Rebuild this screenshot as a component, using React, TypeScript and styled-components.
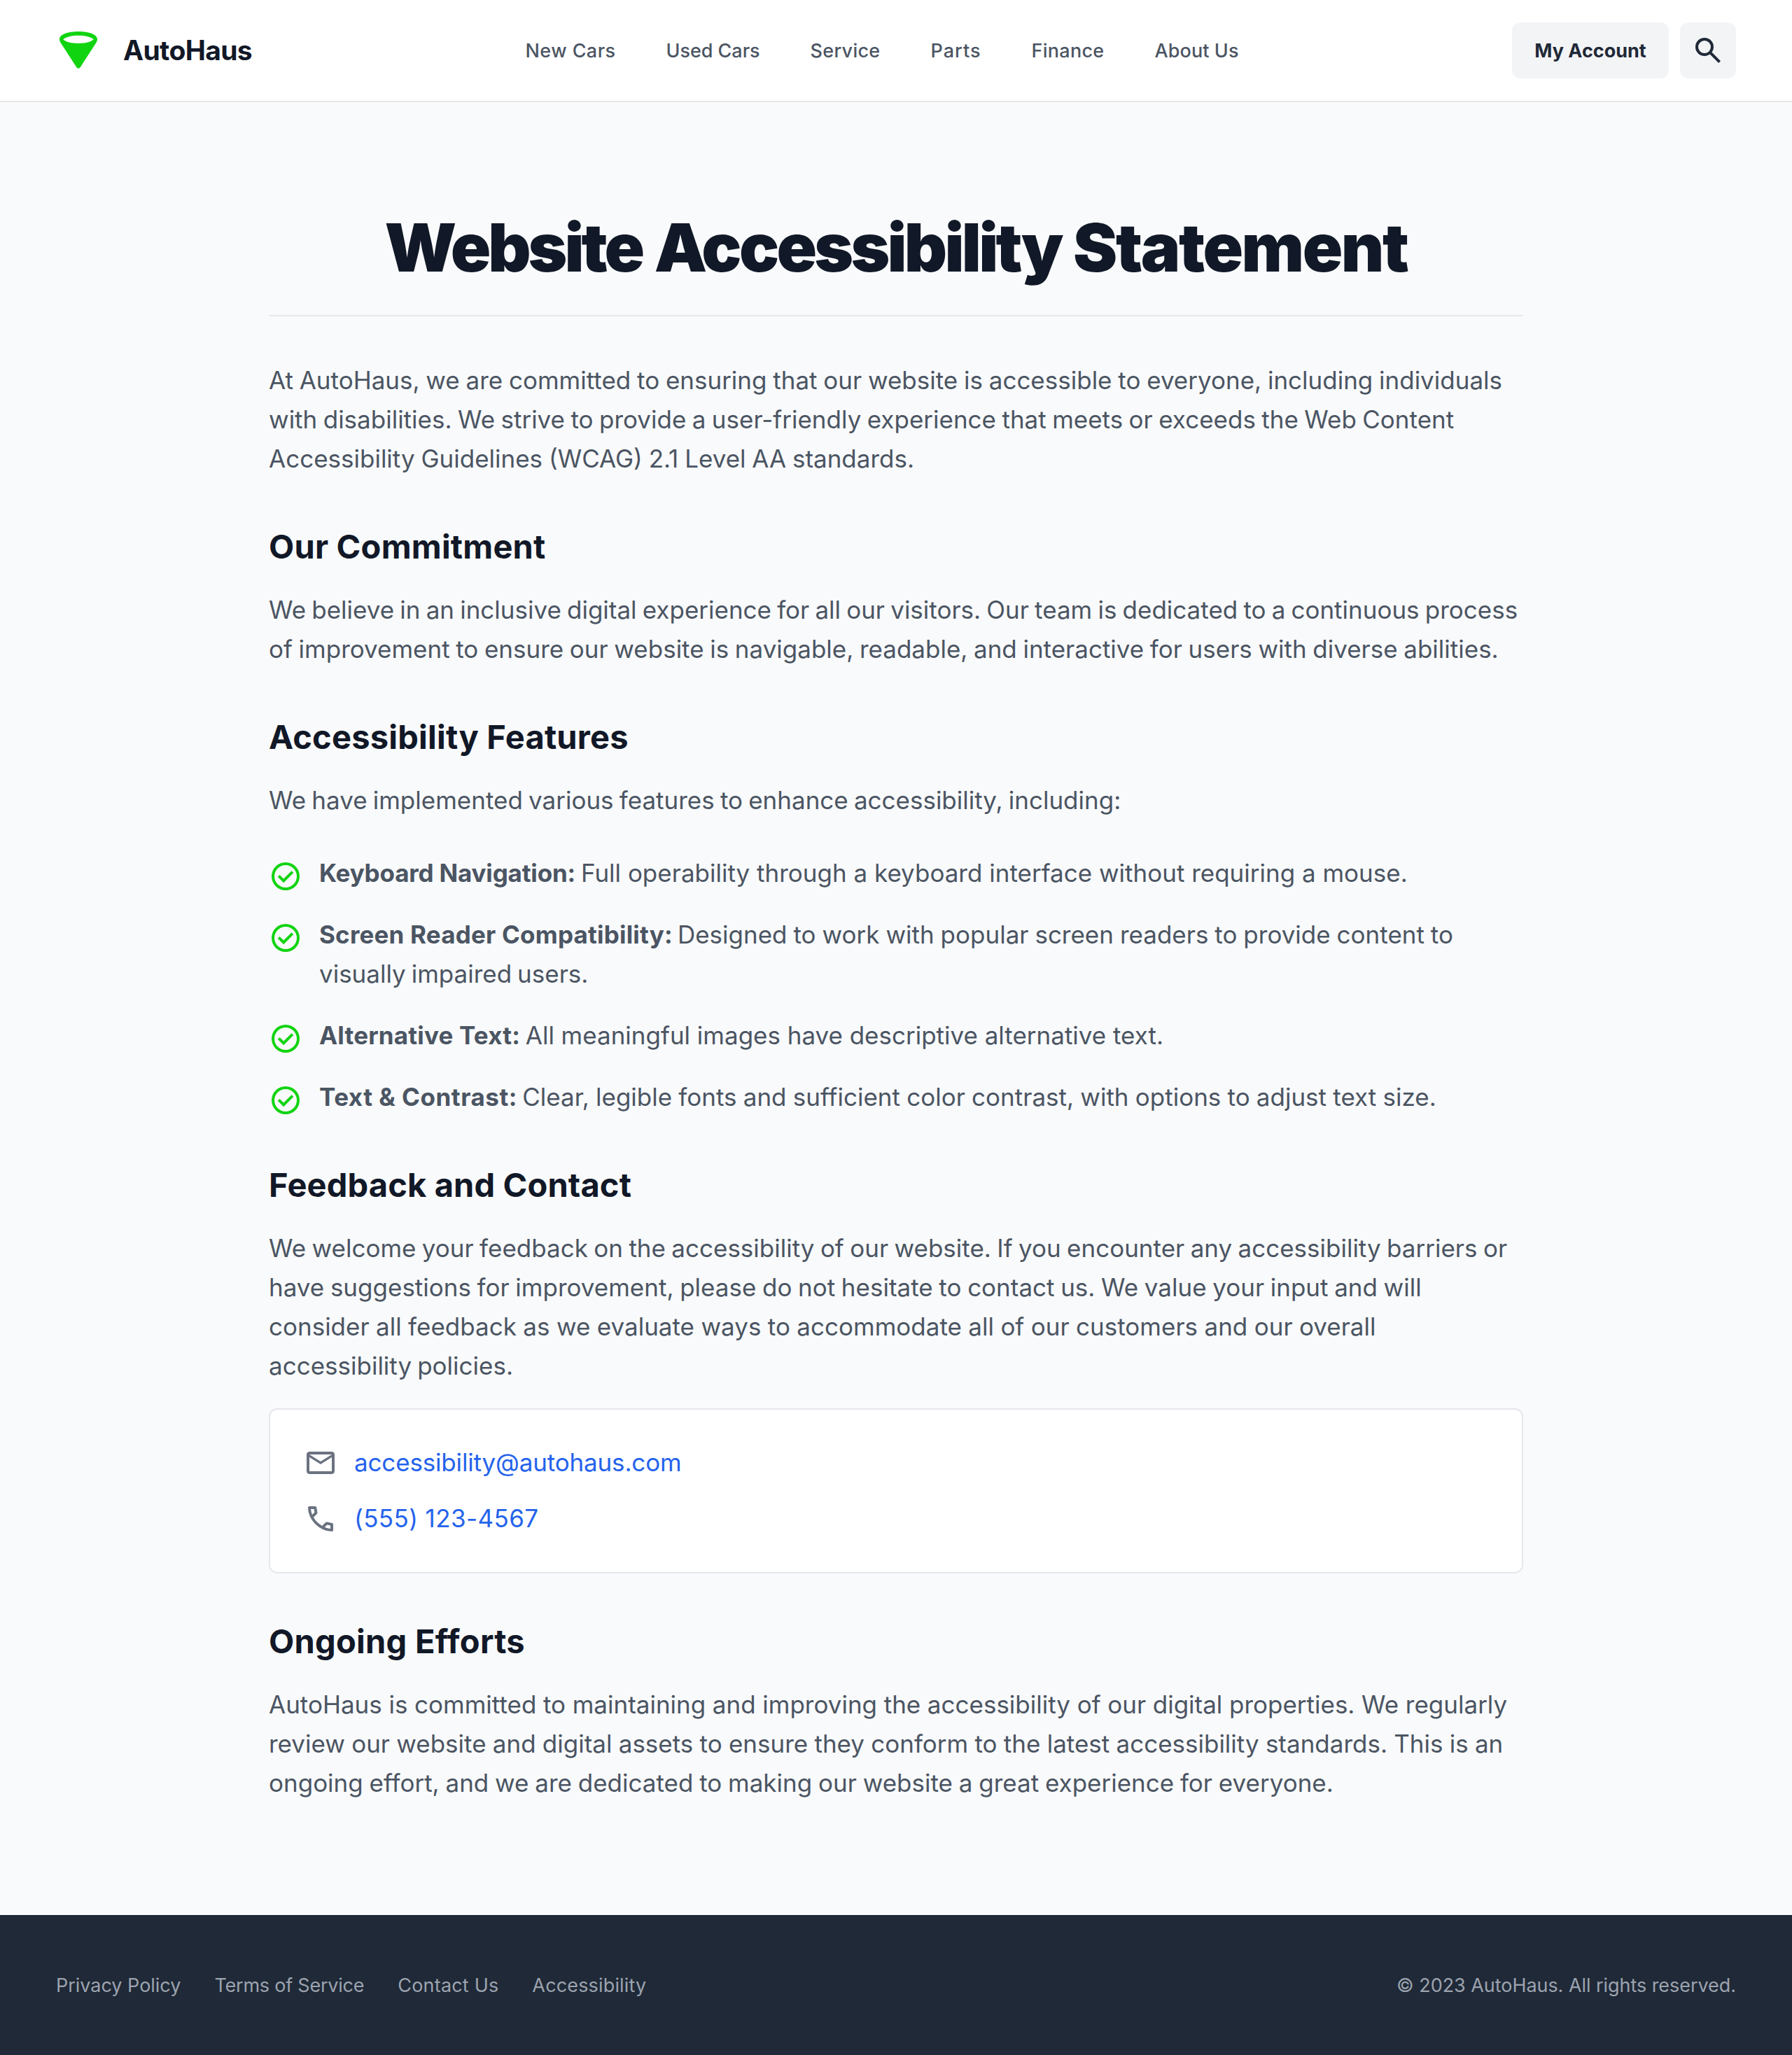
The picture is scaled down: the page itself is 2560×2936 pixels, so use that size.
import React from 'react';
import styled, { createGlobalStyle } from 'styled-components';

const color = {
  page: '#f9fafb',
  ink: '#111827',
  strong: '#1f2937',
  body: '#4b5563',
  muted: '#6b7280',
  faint: '#9ca3af',
  line: '#e5e7eb',
  chip: '#f3f4f6',
  link: '#2563eb',
  brand: '#11d411',
};

const GlobalStyle = createGlobalStyle`
  *, *::before, *::after { box-sizing: border-box; }
  body {
    margin: 0;
    background: ${color.page};
    color: ${color.body};
    font-family: Inter, "Liberation Sans", sans-serif;
  }
  h1, h2, p, ul { margin: 0; padding: 0; }
  ul { list-style: none; }
  a { color: inherit; text-decoration: none; }
`;

const Page = styled.div`
  display: flex;
  flex-direction: column;
  min-height: 2936px;
`;

const Header = styled.header`
  display: flex;
  align-items: center;
  justify-content: space-between;
  height: 146px;
  padding: 0 80px;
  background: #fff;
  border-bottom: 2px solid ${color.line};
`;

const Brand = styled.a`
  display: flex;
  align-items: center;
  gap: 32px;
  width: 280px;
  color: ${color.ink};
  font-size: 39px;
  font-weight: 700;
  line-height: 48px;
  letter-spacing: -0.64px;
  white-space: nowrap;
`;

const Nav = styled.nav`
  display: flex;
  gap: 72px;
  padding-top: 2px;
`;

const NavLink = styled.a<{ $width: number; $track: number }>`
  width: ${(p) => p.$width}px;
  font-size: 27px;
  font-weight: 500;
  line-height: 40px;
  letter-spacing: ${(p) => p.$track}px;
  white-space: nowrap;
`;

const Actions = styled.div`
  display: flex;
  gap: 16px;
`;

const Button = styled.button<{ $width: number; $drop?: number }>`
  display: flex;
  align-items: center;
  justify-content: center;
  width: ${(p) => p.$width}px;
  height: 80px;
  padding: ${(p) => p.$drop ?? 0}px 0 0;
  border: 0;
  border-radius: 12px;
  background: ${color.chip};
  color: ${color.strong};
  font-family: inherit;
  font-size: 27px;
  font-weight: 700;
  line-height: 40px;
  white-space: nowrap;
`;

const Main = styled.main`
  flex: 1;
  width: 1792px;
  margin: 0 auto;
  padding: 160px 0;
`;

const Title = styled.h1`
  margin-bottom: 64px;
  padding-bottom: 48px;
  border-bottom: 2px solid ${color.line};
  color: ${color.ink};
  font-size: 95px;
  font-weight: 900;
  line-height: 96px;
  letter-spacing: -3.5px;
  word-spacing: 2px;
  text-align: center;
  white-space: nowrap;
`;

const TitleWord = styled.span<{ $track: number }>`
  letter-spacing: ${(p) => p.$track}px;
`;

const Section = styled.section`
  margin-top: 64px;
`;

const Heading = styled.h2<{ $track: number }>`
  margin-bottom: 31px;
  padding-top: 1px;
  color: ${color.ink};
  font-size: 47px;
  font-weight: 700;
  line-height: 64px;
  letter-spacing: ${(p) => p.$track}px;
`;

const Copy = styled.p`
  margin-top: -1px;
  padding-bottom: 1px;
  font-size: 35px;
  line-height: 56px;
`;

const Line = styled.span<{ $gap?: number; $track?: number }>`
  display: block;
  white-space: nowrap;
  word-spacing: ${(p) => p.$gap ?? 0}px;
  letter-spacing: ${(p) => p.$track ?? 0}px;
`;

const Features = styled.ul`
  display: flex;
  flex-direction: column;
  gap: 32px;
  margin-top: 48px;
`;

const Feature = styled.li`
  display: flex;
  gap: 24px;
`;

const Term = styled.strong<{ $track: number }>`
  margin-right: -2px;
  font-weight: 700;
  word-spacing: 0;
  letter-spacing: ${(p) => p.$track}px;
`;

const Glyph = styled.svg<{ $size: number; $tint?: string; $drop?: number }>`
  flex: none;
  display: block;
  width: ${(p) => p.$size}px;
  height: ${(p) => p.$size}px;
  margin-top: ${(p) => p.$drop ?? 0}px;
  fill: ${(p) => p.$tint ?? 'currentColor'};
`;

const Card = styled.div`
  display: flex;
  flex-direction: column;
  gap: 24px;
  margin-top: 32px;
  padding: 48px;
  background: #fff;
  border: 2px solid ${color.line};
  border-radius: 12px;
`;

const Contact = styled.div`
  display: flex;
  align-items: center;
  gap: 24px;
`;

const ContactLink = styled.a<{ $track: number }>`
  padding-bottom: 1px;
  margin-top: -1px;
  color: ${color.link};
  font-size: 35px;
  line-height: 56px;
  letter-spacing: ${(p) => p.$track}px;
`;

const Footer = styled.footer`
  display: flex;
  align-items: center;
  justify-content: space-between;
  height: 200px;
  padding: 2px 80px 0;
  background: ${color.strong};
  color: ${color.faint};
  font-size: 27px;
  line-height: 40px;
  white-space: nowrap;
`;

const FooterLinks = styled.nav`
  display: flex;
  gap: 48px;
`;

const FooterText = styled.span<{ $track: number }>`
  letter-spacing: ${(p) => p.$track}px;
`;

const icons = {
  search:
    'M19.6 21 13.3 14.7Q12.55 15.3 11.575 15.65Q10.6 16 9.5 16Q6.775 16 4.8875 14.1125T3 9.5Q3 6.775 4.8875 4.8875T9.5 3Q12.225 3 14.1125 4.8875T16 9.5Q16 10.6 15.65 11.575Q15.3 12.55 14.7 13.3L21 19.6ZM9.5 14Q11.375 14 12.6875 12.6875T14 9.5Q14 7.625 12.6875 6.3125T9.5 5Q7.625 5 6.3125 6.3125T5 9.5Q5 11.375 6.3125 12.6875T9.5 14Z',
  check:
    'M10.6 16.6 17.65 9.55 16.25 8.15 10.6 13.8 7.75 10.95 6.35 12.35ZM12 22A10 10 0 1 1 12 2A10 10 0 1 1 12 22ZM12 20A8 8 0 1 0 12 4A8 8 0 1 0 12 20Z',
  mail:
    'M4 20Q3.175 20 2.5875 19.4125T2 18V6Q2 5.175 2.5875 4.5875T4 4H20Q20.825 4 21.4125 4.5875T22 6V18Q22 18.825 21.4125 19.4125T20 20ZM12 13 4 8V18H20V8ZM12 11 20 6H4ZM4 8V6V18Z',
  call:
    'M19.95 21Q16.825 21 13.775 19.6375T8.225 15.775Q5.725 13.275 4.3625 10.225T3 4.05Q3 3.6 3.3 3.3T4.05 3H8.1Q8.45 3 8.725 3.2375T9.05 3.8L9.7 7.3Q9.75 7.7 9.675 7.975T9.4 8.45L6.975 10.9Q7.475 11.825 8.1625 12.6875T9.675 14.35Q10.45 15.125 11.3 15.7875T13.1 17L15.45 14.65Q15.675 14.425 16.0375 14.3125T16.75 14.25L20.2 14.95Q20.55 15.05 20.775 15.3125T21 15.9V19.95Q21 20.4 20.7 20.7T19.95 21ZM6.025 9 7.675 7.35 7.25 5H5.025Q5.15 6.025 5.375 7.0125T6.025 9ZM14.975 17.95Q15.95 18.375 16.9625 18.625T19 18.95V16.75L16.65 16.275Z',
};

function Icon({ name, tint, drop }: { name: keyof typeof icons; tint?: string; drop?: number }) {
  return (
    <Glyph $size={48} $tint={tint} $drop={drop} viewBox="0 0 24 24" aria-hidden="true">
      <path d={icons[name]} />
    </Glyph>
  );
}

function Logo() {
  return (
    <Glyph $size={64} $tint={color.brand} viewBox="0 0 64 64" aria-hidden="true">
      <path
        fillRule="evenodd"
        d="M5 16C5 9.5 16.5 5 32 5S59 9.5 59 16C59 17.8 58.4 19.4 57.4 20.9L34.6 56.3C33.4 58.2 30.6 58.2 29.4 56.3L6.6 20.9C5.6 19.4 5 17.8 5 16ZM10.3 16.3C14 20.1 22.5 22 32 22S50 20.1 53.7 16.3C50 12.6 41.5 10.7 32 10.7S14 12.6 10.3 16.3Z"
      />
    </Glyph>
  );
}

const navItems = [
  { label: 'New Cars', width: 129, track: 0.43 },
  { label: 'Used Cars', width: 134, track: -0.04 },
  { label: 'Service', width: 100, track: 0.3 },
  { label: 'Parts', width: 72, track: 1.0 },
  { label: 'Finance', width: 104, track: 0.29 },
  { label: 'About Us', width: 120, track: 0.09 },
];

const features = [
  {
    term: 'Keyboard Navigation:',
    track: -0.18,
    lines: [{ text: 'Full operability through a keyboard interface without requiring a mouse.', gap: 0 }],
  },
  {
    term: 'Screen Reader Compatibility:',
    track: 0.2,
    lines: [
      { text: 'Designed to work with popular screen readers to provide content to', gap: -0.9 },
      { text: 'visually impaired users.', gap: -1.9 },
    ],
  },
  {
    term: 'Alternative Text:',
    track: 0.18,
    lines: [{ text: 'All meaningful images have descriptive alternative text.', gap: -0.1 }],
  },
  {
    term: 'Text & Contrast:',
    track: 0.52,
    lines: [
      { text: 'Clear, legible fonts and sufficient color contrast, with options to adjust text size.', gap: -0.6 },
    ],
  },
];

const footerItems = [
  { label: 'Privacy Policy', track: -0.02 },
  { label: 'Terms of Service', track: -0.22 },
  { label: 'Contact Us', track: 0.18 },
  { label: 'Accessibility', track: 0.16 },
];

export default function App() {
  return (
    <Page>
      <GlobalStyle />
      <Header>
        <Brand>
          <Logo />
          AutoHaus
        </Brand>
        <Nav>
          {navItems.map((item) => (
            <NavLink key={item.label} $width={item.width} $track={item.track}>
              {item.label}
            </NavLink>
          ))}
        </Nav>
        <Actions>
          <Button $width={224} $drop={2}>
            My Account
          </Button>
          <Button $width={80} aria-label="Search">
            <Icon name="search" />
          </Button>
        </Actions>
      </Header>

      <Main>
        <Title>
          <TitleWord $track={-4}>Website</TitleWord> <TitleWord $track={-3.75}>Accessibility</TitleWord>{' '}
          <TitleWord $track={-2.5}>Statement</TitleWord>
        </Title>
        <Copy>
          <Line $gap={-1.07}>
            At AutoHaus, we are committed to ensuring that our website is accessible to everyone, including individuals
          </Line>
          <Line $gap={-1.4}>
            with disabilities. We strive to provide a user-friendly experience that meets or exceeds the Web Content
          </Line>
          <Line $gap={-1.03}>Accessibility Guidelines (WCAG) 2.1 Level AA standards.</Line>
        </Copy>

        <Section>
          <Heading $track={0.22}>Our Commitment</Heading>
          <Copy>
            <Line $gap={-1.68}>
              We believe in an inclusive digital experience for all our visitors. Our team is dedicated to a continuous
              process
            </Line>
            <Line $gap={-1.22}>
              of improvement to ensure our website is navigable, readable, and interactive for users with diverse
              abilities.
            </Line>
          </Copy>
        </Section>

        <Section>
          <Heading $track={0.22}>Accessibility Features</Heading>
          <Copy>
            <Line $gap={-1.65}>We have implemented various features to enhance accessibility, including:</Line>
          </Copy>
          <Features>
            {features.map((feature) => (
              <Feature key={feature.term}>
                <Icon name="check" tint={color.brand} drop={8} />
                <Copy>
                  {feature.lines.map((line, index) => (
                    <Line key={line.text} $gap={line.gap}>
                      {index === 0 && <Term $track={feature.track}>{feature.term}</Term>}
                      {index === 0 && ' '}
                      {line.text}
                    </Line>
                  ))}
                </Copy>
              </Feature>
            ))}
          </Features>
        </Section>

        <Section>
          <Heading $track={0.15}>Feedback and Contact</Heading>
          <Copy>
            <Line $gap={-1.44}>
              We welcome your feedback on the accessibility of our website. If you encounter any accessibility barriers
              or
            </Line>
            <Line $gap={-1.18}>
              have suggestions for improvement, please do not hesitate to contact us. We value your input and will
            </Line>
            <Line $gap={-0.4}>
              consider all feedback as we evaluate ways to accommodate all of our customers and our overall
            </Line>
            <Line $gap={-1.8}>accessibility policies.</Line>
          </Copy>
          <Card>
            <Contact>
              <Icon name="mail" tint={color.muted} />
              <ContactLink $track={-0.16}>accessibility@autohaus.com</ContactLink>
            </Contact>
            <Contact>
              <Icon name="call" tint={color.muted} />
              <ContactLink $track={0.4}>(555) 123-4567</ContactLink>
            </Contact>
          </Card>
        </Section>

        <Section>
          <Heading $track={0.27}>Ongoing Efforts</Heading>
          <Copy>
            <Line $gap={-0.2}>
              AutoHaus is committed to maintaining and improving the accessibility of our digital properties. We
              regularly
            </Line>
            <Line $gap={-0.58}>
              review our website and digital assets to ensure they conform to the latest accessibility standards. This
              is an
            </Line>
            <Line $gap={-1.05}>
              ongoing effort, and we are dedicated to making our website a great experience for everyone.
            </Line>
          </Copy>
        </Section>
      </Main>

      <Footer>
        <FooterLinks>
          {footerItems.map((item) => (
            <FooterText as="a" key={item.label} $track={item.track}>
              {item.label}
            </FooterText>
          ))}
        </FooterLinks>
        <FooterText $track={-0.05}>© 2023 AutoHaus. All rights reserved.</FooterText>
      </Footer>
    </Page>
  );
}
